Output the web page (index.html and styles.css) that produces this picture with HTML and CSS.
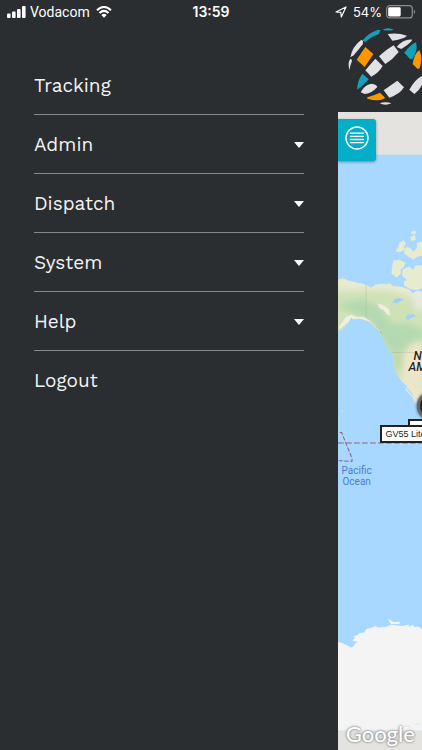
FILE: index.html
```html
<!DOCTYPE html>
<html lang="en">
<head>
<meta charset="utf-8">
<meta name="viewport" content="width=device-width, initial-scale=1">
<title>Tracking</title>
<link rel="stylesheet" href="styles.css">
</head>
<body>
<header class="status">
  <div class="status-left">
    <svg class="signal" viewBox="0 0 19 12" aria-hidden="true"><rect x="0" y="7.500" width="3.600" height="4.500" rx="1"/><rect x="5" y="5.500" width="3.600" height="6.500" rx="1"/><rect x="10" y="3" width="3.600" height="9" rx="1"/><rect x="15" y="0" width="3.600" height="12" rx="1"/></svg>
    <span>Vodacom</span>
    <svg class="wifi" viewBox="0 0 16 12" aria-hidden="true"><path d="M1 4.200Q8-2.200 15 4.200M3.500 7Q8 2.800 12.500 7" fill="none" stroke="#fff" stroke-width="2.100"/><path d="M5.300 8.900Q8 6.400 10.700 8.900L8 11.700Z"/></svg>
  </div>
  <time class="clock">13:59</time>
  <div class="status-right">
    <svg class="location" viewBox="0 0 12 12" aria-hidden="true"><path d="M1 6L11 1L6.300 11L5.800 6.300Z" fill="none" stroke="#fff" stroke-width="1.200" stroke-linejoin="round"/></svg>
    <span>54%</span>
    <svg class="battery" viewBox="0 0 30 14" aria-hidden="true"><rect x=".7" y=".7" width="25.600" height="12.200" rx="3" fill="none" stroke="#8b8e90" stroke-width="1.200"/><rect x="2.200" y="2.200" width="12.500" height="9.200" rx="1.300"/><path d="M27.800 4.500Q30.500 6.800 27.800 9.100Z" fill="#8b8e90"/></svg>
  </div>
</header>
<div class="shell">
  <nav class="menu" aria-label="Main">
    <ul>
      <li><a href="#">Tracking</a></li>
      <li><button type="button">Admin<span class="caret"></span></button></li>
      <li><button type="button">Dispatch<span class="caret"></span></button></li>
      <li><button type="button">System<span class="caret"></span></button></li>
      <li><button type="button">Help<span class="caret"></span></button></li>
      <li><a href="#">Logout</a></li>
    </ul>
  </nav>
  <main class="app">
    <div class="brand">
      <svg class="logo" viewBox="30 18 240 246" role="img" aria-label="Globe logo">
        <g fill="#e2e1e6">
          <path d="M155 42Q185 37 213 47L205 53Q185 60 169 62Z"/>
          <path d="M76 59Q84 62 80 73Q69 88 53 106L43 112Q48 80 76 59Z"/>
          <path d="M42 117Q50 117 47 126Q42 136 41 151Q34 133 42 117Z"/>
          <path d="M182 81Q203 56 229 59Q223 70 196 87Z"/>
          <path d="M129 109Q151 88 173 76L188 96Q171 118 148 132Z"/>
          <path d="M118 116L140 138Q129 158 106 170L88 151Z"/>
          <path d="M143 211L184 182L204 202Q190 224 160 233Z"/>
          <path d="M74 217Q85 195 106 191Q123 194 124 201Q105 222 86 222Z"/>
          <path d="M220 209Q238 178 256 169Q267 170 263 182Q256 207 235 222Z"/>
          <path d="M131 250Q148 244 166 250Q149 258 131 250Z"/>
        </g>
        <g fill="#149fba">
          <path d="M79 62Q96 39 126 29L134 31L128 43Q107 49 88 66Z"/>
          <path d="M139 29Q156 20 174 29Q157 34 139 29Z"/>
          <path d="M205 98Q226 71 240 67Q247 94 229 117L222 117Z"/>
          <path d="M79 161L98 178Q86 194 64 209Q63 184 79 161Z"/>
        </g>
        <g fill="#fb9800">
          <path d="M88 81L112 102L86 141L62 119Z"/>
          <path d="M230 132Q234 101 250 90Q262 118 250 146L244 146Z"/>
          <path d="M94 232Q114 226 132 218L148 234Q130 246 94 236Z"/>
        </g>
      </svg>
    </div>
    <div class="map">
      <svg class="land" viewBox="5 0 253 1914" preserveAspectRatio="xMinYMin slice" aria-hidden="true">
        <defs>
          <filter id="soft" x="-30%" y="-30%" width="160%" height="160%"><feGaussianBlur stdDeviation="9"/></filter>
          <clipPath id="coast"><path d="M0 178L22 174L34 181L48 184L62 188L76 190L90 195L104 203L118 194L136 191L152 193L160 189L170 198L186 199L202 203L218 207L228 219L244 212L258 214V513L246 522L232 513L216 501L204 491L187 474L180 461L172 438L170 408L161 392L145 371L139 351L125 331L113 320L101 307L86 300L70 296L50 298L45 291L34 309L24 323L12 332L0 336Z"/></clipPath>
        </defs>
        <rect width="900" height="1914" fill="#a8d8ff"/>
        <rect width="900" height="128" fill="#e4e3df"/>
        <g transform="translate(0 324)">
          <g fill="#e7ebcf">
            <path d="M223 36L236 31L239 40L229 43ZM221 51L236 45L238 60L225 63ZM202 61L208 70L202 81L206 88L192 96L177 94L186 81L188 69ZM209 80L224 85L231 96L243 80L240 68L258 64V107L243 110L232 118L214 109L202 99ZM170 121L189 119L207 128L203 140L192 148L194 160L181 172L165 160ZM199 147L218 139L230 149L237 135L258 135V205L240 210L218 205L203 196L202 183L212 180L197 167Z"/>
          </g>
          <g clip-path="url(#coast)">
            <rect y="160" width="258" height="390" fill="#cfe2b6"/>
            <g filter="url(#soft)">
              <path d="M0 165H270V235L215 228L160 212L95 210L0 212Z" fill="#e8ebd1"/>
              <path d="M0 255L70 235L130 260L160 310L215 310L260 330V365L215 390L165 395L125 345L100 305Z" fill="#b4d9b0"/>
              <path d="M224 207H260V270L237 267Z" fill="#ebe9e3"/>
              <path d="M205 398L220 372L260 361V530H190Z" fill="#ece6c9"/>
              <path d="M170 394L199 398L195 445L174 451Z" fill="#bdd9a7"/>
            </g>
            <g fill="#edf0df" stroke="#d6dfc6" stroke-width="2">
              <path d="M122 249L139 253L159 267L163 288L151 283L143 271L129 264Z"/>
              <path d="M28 290L45 283L62 290L82 290L101 300L119 316L135 333L127 330L103 307L78 298L47 297L31 311L9 329L6 321Z"/>
            </g>
            <path d="M107 307L119 319L126 324L137 341" fill="none" stroke="#899487" stroke-width="2" stroke-dasharray="5 4"/>
            <path d="M89 195V291L104 306M168 397H234" fill="none" stroke="#a1aca0" stroke-width="1"/>
            <path d="M167 246L174 237L184 234L194 234L201 240L188 244L184 250ZM207 295L214 282L222 284L229 280L239 288L225 293L215 300Z" fill="#9fd2f5"/>
          </g>
        </g>
        <g transform="translate(0 684)">
          <path d="M208 140L225 155L239 186L258 209V144L239 131Z" fill="#ece6c9"/>
          <path d="M208 146L231 172L239 190M226 151L247 181" fill="none" stroke="#ede8cc" stroke-width="4"/>
          <circle cx="18" cy="212" r="2" fill="#e9efd3"/>
          <path d="M5 308H258" fill="none" stroke="#8f6080" stroke-width="3" stroke-dasharray="17 7"/>
          <path d="M10 277H16L47 354V363L7 361" fill="none" stroke="#8f6080" stroke-width="3" stroke-dasharray="13 5"/>
        </g>
        <g transform="translate(0 1464)" fill="#f4f4f4">
          <path d="M0 124L16 127L32 134L45 142L53 136L57 128L65 125L48 121L56 111L50 108L64 104L70 98L84 96L90 86L108 81L117 76L124 81L148 80L165 73L184 75L200 77L216 72L218 79L230 73L233 80L248 79L258 89V391H0ZM154 55L171 65L191 64L189 71L164 71Z"/>
          <rect y="391" width="900" height="59" fill="#e4e3df"/>
          <path d="M202 378L216 376L224 381M237 371L250 370" fill="none" stroke="#e3e3e3" stroke-width="3"/>
        </g>
      </svg>
      <button class="toggle" type="button" aria-label="Toggle list">
        <svg viewBox="0 0 24 24" aria-hidden="true"><g fill="none" stroke="#fff" stroke-width="1.400" stroke-linecap="round"><circle cx="12" cy="12" r="11"/><path d="M5.500 7.300H18.500M5.500 10.400H18.500M5.500 13.500H18.500M5.500 16.600H18.500"/></g></svg>
      </button>
      <span class="continent">NORTH<br>AMERICA</span>
      <span class="marker"></span>
      <span class="tag tag-back"></span>
      <span class="tag">GV55 Lite</span>
      <span class="ocean">Pacific<br>Ocean</span>
      <span class="google">Google</span>
    </div>
  </main>
</div>
</body>
</html>
```
FILE: styles.css
```css
* {
  box-sizing: border-box;
}

body {
  margin: 0;
  min-height: 100vh;
  display: flex;
  flex-direction: column;
  overflow-x: hidden;
  background: #2b2e31;
  color: #fff;
  font-family: Inter, "Liberation Sans", sans-serif;
}

.status {
  display: grid;
  grid-template-columns: 1fr auto 1fr;
  align-items: center;
  height: 24px;
  padding: 0 7px;
  font-size: 13px;
  line-height: 24px;
}

.status svg {
  fill: #fff;
}

.status-left,
.status-right {
  display: flex;
  align-items: center;
  gap: 4px;
}

.status-left {
  font-family: Roboto, sans-serif;
  font-size: 14px;
}

.status-right {
  justify-content: flex-end;
}

.clock {
  font-size: 14px;
  font-weight: 600;
}

.signal {
  width: 19px;
  height: 12px;
}

.wifi {
  width: 16px;
  height: 12px;
  margin-left: 2px;
}

.location {
  width: 12px;
  height: 12px;
  margin-right: 2px;
}

.battery {
  width: 30px;
  height: 14px;
}

.status-right {
  margin-right: -1px;
}

.shell {
  flex: 1;
  display: grid;
  grid-template-columns: 80% minmax(0, 1fr);
}

.menu {
  padding: 32px 34px;
}

.menu ul {
  margin: 0;
  padding: 0;
  list-style: none;
}

.menu li {
  border-bottom: 1px solid #85888a;
}

.menu li:last-child {
  border-bottom: 0;
}

.menu a,
.menu button {
  display: flex;
  align-items: center;
  justify-content: space-between;
  width: 100%;
  height: 58px;
  padding: 1px 0 0;
  border: 0;
  background: none;
  color: #f4f4f4;
  font-family: "Work Sans", Inter, sans-serif;
  font-size: 19px;
  line-height: 24px;
  text-decoration: none;
}

.caret {
  border: 5px solid transparent;
  border-top: 6px solid #fff;
  border-bottom: 0;
}

.app {
  display: flex;
  flex-direction: column;
  overflow: hidden;
}

.brand {
  height: 88px;
  padding: 2px 0 0 8px;
  overflow: hidden;
}

.logo {
  display: block;
  width: 80px;
  height: 82px;
}

.map {
  position: relative;
  flex: 1;
  min-height: 600px;
  overflow: hidden;
  background: #a8d8ff;
}

.land {
  position: absolute;
  inset: 0;
  width: 100%;
  height: 100%;
}

.toggle {
  position: absolute;
  top: 7px;
  left: 0;
  width: 38px;
  height: 42px;
  padding: 7px 7px 11px;
  border: 0;
  border-radius: 0 3px 3px 0;
  background: #05aec8;
  box-shadow: 0 1px 3px #0006;
}

.toggle svg {
  display: block;
  width: 24px;
  height: 24px;
}

.continent {
  position: absolute;
  top: 239px;
  left: 71px;
  color: #222;
  font: italic 500 12px/11px Roboto, sans-serif;
  text-indent: 5px;
  text-shadow: 0 0 2px #fff;
}

.marker {
  position: absolute;
  top: 279px;
  left: 79px;
  width: 30px;
  height: 30px;
  border: 3px solid #666;
  border-radius: 50%;
  background: #222;
  box-shadow: 0 0 3px #333;
}

.tag {
  position: absolute;
  top: 313px;
  left: 42px;
  height: 18px;
  padding: 0 4px;
  border: 2px solid #222;
  background: #fff;
  color: #222;
  font: 9px/14px "Liberation Sans", sans-serif;
  white-space: nowrap;
}

.tag-back {
  top: 307px;
  left: 70px;
  width: 48px;
}

.ocean {
  position: absolute;
  top: 353px;
  left: 4px;
  color: #4a7fc8;
  font: 10px/11px Roboto, sans-serif;
  text-align: center;
}

.google {
  position: absolute;
  right: 7px;
  bottom: 4px;
  color: #fff;
  font: 500 22px/24px Lato, sans-serif;
  text-shadow: 0 0 2px #777, 0 0 3px #999;
}
```
